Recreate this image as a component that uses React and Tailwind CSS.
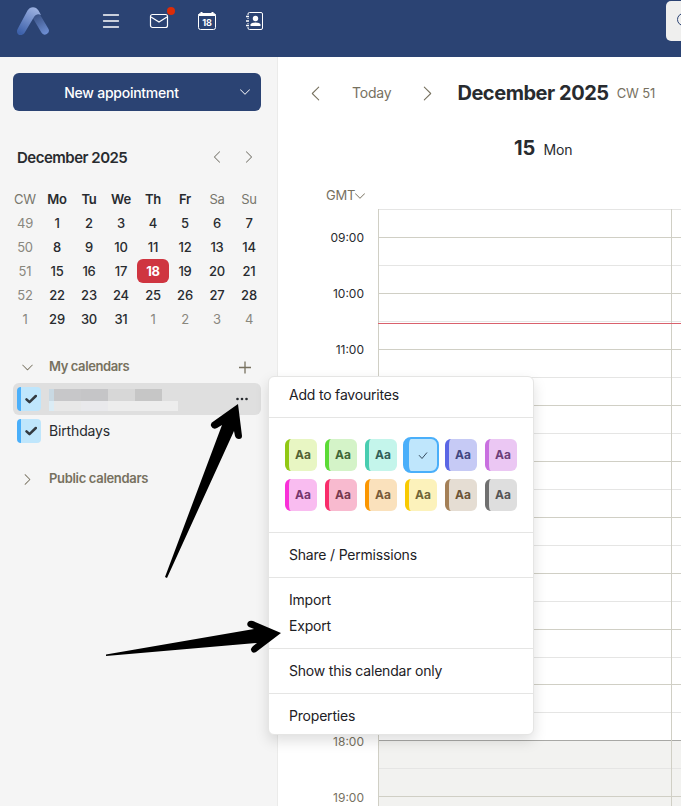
import { BsChevronLeft, BsChevronRight, BsChevronDown } from "react-icons/bs";

const weeks = [
  [49, 1, 2, 3, 4, 5, 6, 7],
  [50, 8, 9, 10, 11, 12, 13, 14],
  [51, 15, 16, 17, 18, 19, 20, 21],
  [52, 22, 23, 24, 25, 26, 27, 28],
  [1, 29, 30, 31, 1, 2, 3, 4],
];

const swatches = [
  { base: "bg-[#e8f6c3]", bar: "border-[#91c813]", text: "text-[#526234]" },
  { base: "bg-[#d4f3c8]", bar: "border-[#5bdb35]", text: "text-[#3f6637]" },
  { base: "bg-[#c4f5eb]", bar: "border-[#48cdb0]", text: "text-[#315f58]" },
  { base: "bg-[#bfe6fc]", bar: "border-[#4aaffa]", text: "text-[#354b5e]", active: true },
  { base: "bg-[#c6caf5]", bar: "border-[#5a66e5]", text: "text-[#414780]" },
  { base: "bg-[#ebc7f3]", bar: "border-[#c970e0]", text: "text-[#6c3f79]" },
  { base: "bg-[#f9bcf0]", bar: "border-[#f930d8]", text: "text-[#75366d]" },
  { base: "bg-[#f8bacf]", bar: "border-[#f92c6b]", text: "text-[#75394e]" },
  { base: "bg-[#fae1bc]", bar: "border-[#fb9600]", text: "text-[#775b39]" },
  { base: "bg-[#fcf2bb]", bar: "border-[#f9ca00]", text: "text-[#716537]" },
  { base: "bg-[#e5ddd3]", bar: "border-[#a48057]", text: "text-[#6b5436]" },
  { base: "bg-[#dedede]", bar: "border-[#707070]", text: "text-[#555555]" },
];

// labels behind the open menu stay empty
const hours = ["09:00", "10:00", "11:00", "", "", "", "", "", "", "18:00", "19:00"];

function TopBar() {
  return (
    <header className="h-[57px] shrink-0 bg-[#2b4373] flex items-start justify-between text-white overflow-hidden">
      <div className="flex items-start">
        <svg className="ml-4 mt-[6px] w-[34px] h-[30px]" viewBox="0 0 34 30" fill="none" strokeLinecap="round">
          <defs>
            <linearGradient id="logoLeft" x1="18" y1="2" x2="4" y2="27" gradientUnits="userSpaceOnUse">
              <stop stopColor="#9bb0e0" />
              <stop offset="1" stopColor="#3d61aa" />
            </linearGradient>
            <linearGradient id="logoRight" x1="20" y1="9" x2="30" y2="27" gradientUnits="userSpaceOnUse">
              <stop stopColor="#3a5285" />
              <stop offset="1" stopColor="#6c8cd0" />
            </linearGradient>
          </defs>
          <path d="M20.500 10.500L28.800 24.500" stroke="url(#logoRight)" strokeWidth="8" />
          <path d="M1.600 23L11.500 4.500C14 0 20 0 22.500 4.500L25 9C22.500 7.500 20 7.800 18 11L8.500 27C5 31.500 -1 28 1.600 23Z" fill="url(#logoLeft)" />
        </svg>
        <svg className="ml-[52px] mt-[13px] w-[18px] h-4" viewBox="0 0 18 16" stroke="currentColor" strokeWidth="1.300" strokeLinecap="round">
          <path d="M1.500 2H16.500M1.500 8H16.500M1.500 14H16.500" />
        </svg>
        <div className="relative ml-[29px] mt-[13px]">
          <svg className="w-5 h-4" viewBox="0 0 20 16" fill="none" stroke="currentColor" strokeWidth="1.200">
            <rect x="1.500" y="1.500" width="17" height="13" rx="2" />
            <path d="M2 4L10 9L18 4" />
          </svg>
          <span className="absolute -right-[6px] -top-[6px] size-2 rounded-full bg-[#db2c08]" />
        </div>
        <svg className="ml-[28px] mt-[11px] size-5" viewBox="0 0 20 20" fill="none" stroke="currentColor">
          <rect x="1.500" y="2.500" width="17" height="16" rx="2" />
          <path d="M1.500 4H18.500M4.500 1V3M15.500 1V3" strokeWidth="2" />
          <text x="10" y="15" textAnchor="middle" stroke="none" fill="currentColor" className="font-['Inter'] text-[9px] font-bold">18</text>
        </svg>
        <svg className="ml-[28px] mt-[11px] size-5" viewBox="0 0 20 20" fill="none" stroke="currentColor">
          <path d="M3 4V3Q3 1.500 4.500 1.500H16Q17.500 1.500 17.500 3V17Q17.500 18.500 16 18.500H4.500Q3 18.500 3 17V16M3 7V8M3 12V13" />
          <path d="M1 5.500H4M1 10H4M1 14.500H4" strokeWidth="1.500" />
          <circle cx="10.500" cy="7.500" r="2.700" fill="currentColor" stroke="none" />
          <path d="M5.500 15V13.500Q6 11.500 10.500 11.500T15.500 13.500V15Z" fill="currentColor" stroke="none" />
        </svg>
      </div>
      <div className="mt-px w-[15px] h-10 rounded-l-[5px] bg-[#efefee] overflow-hidden">
        <svg className="ml-[11px] mt-[11px] size-4" viewBox="0 0 16 16" fill="none" stroke="#2b4373">
          <circle cx="6.500" cy="7.500" r="6" />
        </svg>
      </div>
    </header>
  );
}

function MiniCalendar() {
  return (
    <div>
      <div className="flex items-center mt-[35px] h-6 pl-1 text-[#282b2f]">
        <span className="text-[15px] font-semibold flex-1 tracking-[-0.5px]">December 2025</span>
        <BsChevronLeft size={14} className="mr-[18px] mb-[2px] text-[#77756c]" />
        <BsChevronRight size={14} className="mr-[5px] mb-[2px] text-[#77756c]" />
      </div>
      <div className="mt-[17px] -ml-1 grid grid-cols-[repeat(8,32px)] auto-rows-[24px] text-[13px] text-center leading-6 tracking-[-0.2px]">
        {["CW", "Mo", "Tu", "We", "Th", "Fr", "Sa", "Su"].map((d, i) => (
          <span key={d} className={i === 0 || i > 5 ? "text-[#77756c]" : "font-semibold text-[#282b2f]"}>{d}</span>
        ))}
        {weeks.map((week, row) =>
          week.map((n, col) => {
            const muted = col === 0 || (row === 4 && col > 3);
            if (row === 2 && n === 18) {
              return <span key={n} className="rounded-md bg-[#cf3540] font-bold text-white">{n}</span>;
            }
            return (
              <span key={`${row}-${col}`} className={muted ? "text-[#89877e]" : "font-medium text-[#282b2f]"}>{n}</span>
            );
          })
        )}
      </div>
    </div>
  );
}

function CalendarCheck() {
  return (
    <span className="size-6 shrink-0 rounded-[4px] border-l-4 border-[#4aaffa] bg-[#bfe6fc] flex items-center justify-center text-[#333a40]">
      <svg className="size-3" viewBox="0 0 12 12" fill="none" stroke="currentColor" strokeWidth="2.500" strokeLinecap="round" strokeLinejoin="round">
        <path d="M1.500 6.300L4.500 9.200L10.800 3" />
      </svg>
    </span>
  );
}

function Sidebar() {
  return (
    <aside className="w-[278px] shrink-0 bg-[#f5f5f5] border-r border-[#ebebea] pl-[13px] pr-4 pt-4">
      <button className="flex items-center w-full h-[38px] rounded-md bg-[#2b4373] text-white">
        <span className="flex-1 text-center text-[14px] font-medium pr-[9px] tracking-[-0.25px]">New appointment</span>
        <BsChevronDown size={12} className="mr-[10px]" />
      </button>
      <MiniCalendar />
      <div className="mt-5 h-8 flex items-center text-[#77715f] text-[13px] font-semibold">
        <BsChevronDown size={13} className="ml-[8px]" />
        <span className="ml-[15px] flex-1 tracking-[-0.4px]">My calendars</span>
        <svg className="mr-[9px] size-[14px]" viewBox="0 0 14 14" stroke="currentColor" strokeWidth="1.300">
          <path d="M1 7.500H13M7 1.500V13.500" />
        </svg>
      </div>
      <div className="h-8 rounded-md bg-[#dfdfdf] flex items-center pl-1">
        <CalendarCheck />
        <div className="ml-2 pt-[2px] flex-1">
          <div className="flex h-3">
            <i className="w-[5px] bg-[#c9d9e3]" />
            <i className="w-[27px] bg-[#c7c7c9]" />
            <i className="w-[27px] bg-[#c5c5c7]" />
            <i className="w-[27px] bg-[#d7d7d7]" />
            <i className="w-[27px] bg-[#c6c6c6]" />
          </div>
          <div className="flex h-[10px]">
            <i className="w-[5px] bg-[#dbecf5]" />
            <i className="w-[27px] bg-[#e8e8e8]" />
            <i className="w-[27px] bg-[#e9e9ec]" />
            <i className="w-[70px] bg-[#ededed]" />
          </div>
        </div>
        <svg className="mr-[12px] w-[14px] h-1" viewBox="0 0 14 4" fill="#282b2f">
          <circle cx="2.500" cy="2" r="1.300" />
          <circle cx="7" cy="2" r="1.300" />
          <circle cx="11.500" cy="2" r="1.300" />
        </svg>
      </div>
      <div className="h-8 flex items-center pl-1 text-[14px] text-[#282b2f]">
        <CalendarCheck />
        <span className="ml-2 pb-px tracking-[-0.15px]">Birthdays</span>
      </div>
      <div className="mt-4 h-8 flex items-center text-[#77715f] text-[13px] font-semibold">
        <BsChevronRight size={13} className="ml-[8px]" />
        <span className="ml-[15px] tracking-[-0.32px]">Public calendars</span>
      </div>
    </aside>
  );
}

function DayColumn({ className }) {
  return (
    <div className={className}>
      <div className="h-7 border-t border-[#e5e5e4]" />
      {hours.map((h, i) => (
        <div key={i} className={i > 8 ? "bg-[#f2f2f0]" : ""}>
          <div className={i === 9 ? "h-7 border-t border-[#a8a8a5]" : "h-7 border-t border-[#d0cfc5]"} />
          <div className={i === 4 || i === 7 ? "h-[27.500px] border-t border-[#e5e5e4]" : "h-[28px] border-t border-[#e5e5e4]"} />
        </div>
      ))}
    </div>
  );
}

function WeekView() {
  return (
    <main className="flex-1 min-w-0 bg-white overflow-hidden text-[#282b2f]">
      <div className="flex items-center h-[72px] whitespace-nowrap text-[14px] text-[#77715f]">
        <BsChevronLeft size={17} className="ml-[29px] shrink-0" />
        <span className="ml-[28px] pb-px tracking-[-0.2px]">Today</span>
        <BsChevronRight size={17} className="ml-[28px] shrink-0" />
        <h1 className="ml-[21px] text-[20px] font-bold tracking-[-0.46px] text-[#282b2f]">December 2025</h1>
        <span className="ml-[8px] pt-[2px] text-[13px] tracking-[-0.1px]">CW 51</span>
      </div>
      <div className="h-10 ml-[236px] flex items-baseline">
        <span className="text-[20px] font-bold leading-[39px]">15</span>
        <span className="ml-2 text-[14px] tracking-[-0.1px]">Mon</span>
      </div>
      <div className="h-[40px] flex items-start pt-[17px] pl-12 text-[13px] text-[#77715f]">
        <span className="tracking-[-0.2px]">GMT</span>
        <BsChevronDown size={12} className="-ml-px mt-[4px]" />
      </div>
      <div className="relative flex">
        <div className="w-[100px] shrink-0 pr-[14px] pt-[19px] text-right text-[12px]">
          {hours.map((h, i) => (
            <div key={i} className={i > 8 ? "h-14 leading-5 text-[#77715f]" : "h-14 leading-5"}>{h}</div>
          ))}
        </div>
        <DayColumn className="w-[293px] shrink-0 border-l border-[#d0cfc5]" />
        <DayColumn className="flex-1 border-l border-[#d0cfc5]" />
        <div className="absolute left-[100px] right-0 top-[114px] h-px bg-[#d9606c]" />
      </div>
    </main>
  );
}

function MenuItem({ children }) {
  return <div className="h-[26px] leading-[26px] px-5 text-[14px] tracking-[-0.2px]">{children}</div>;
}

function ContextMenu() {
  return (
    <div className="absolute left-[268px] top-[376px] w-[266px] h-[359px] rounded-md border border-[#e5e5e4] bg-white text-[#1d2125] shadow-[0_6px_14px_rgba(0,0,0,0.13)] divide-y divide-[#e5e5e4]">
      <div className="h-[41px] pt-[5px]"><MenuItem>Add to favourites</MenuItem></div>
      <div className="h-[115px] pt-[21px] pl-4 grid grid-cols-[repeat(6,32px)] auto-rows-[32px] gap-2">
        {swatches.map((s) =>
          s.active ? (
            <div key={s.bar} className={`-m-[2px] rounded-lg border-2 border-l-[6px] flex items-center justify-center ${s.base} ${s.bar} ${s.text}`}>
              <svg className="size-[10px]" viewBox="0 0 10 10" fill="none" stroke="currentColor">
                <path d="M1 5.200L4 8.500L9 2.500" />
              </svg>
            </div>
          ) : (
            <div key={s.bar} className={`rounded-md border-l-4 flex items-center justify-center text-[12px] font-bold ${s.base} ${s.bar} ${s.text}`}>Aa</div>
          )
        )}
      </div>
      <div className="h-[45px] pt-[9px]"><MenuItem>Share / Permissions</MenuItem></div>
      <div className="h-[71px] pt-[9px]">
        <MenuItem>Import</MenuItem>
        <MenuItem>Export</MenuItem>
      </div>
      <div className="h-[45px] pt-[9px]"><MenuItem>Show this calendar only</MenuItem></div>
      <div className="pt-[9px]"><MenuItem>Properties</MenuItem></div>
    </div>
  );
}

function Arrows() {
  return (
    <svg className="absolute left-0 top-0 pointer-events-none" width="681" height="806" viewBox="0 0 681 806" fill="black">
      <path d="M165 577L222 425L217 428Q213 430 211 426Q210 423 214 421L238 404L242 436Q242 439 239 439Q236 439 235 436L234 431L167 578Z" />
      <path d="M106 654.500L254 629L249 627Q246 625 248 622Q250 620 253 621L281 633L256 652Q252 654 251 650Q250 648 257 643L106 656Z" />
    </svg>
  );
}

export default function App() {
  return (
    <div className="relative w-[681px] h-[806px] overflow-hidden flex flex-col font-['Inter',sans-serif]">
      <TopBar />
      <div className="flex flex-1 min-h-0">
        <Sidebar />
        <WeekView />
      </div>
      <ContextMenu />
      <Arrows />
    </div>
  );
}
